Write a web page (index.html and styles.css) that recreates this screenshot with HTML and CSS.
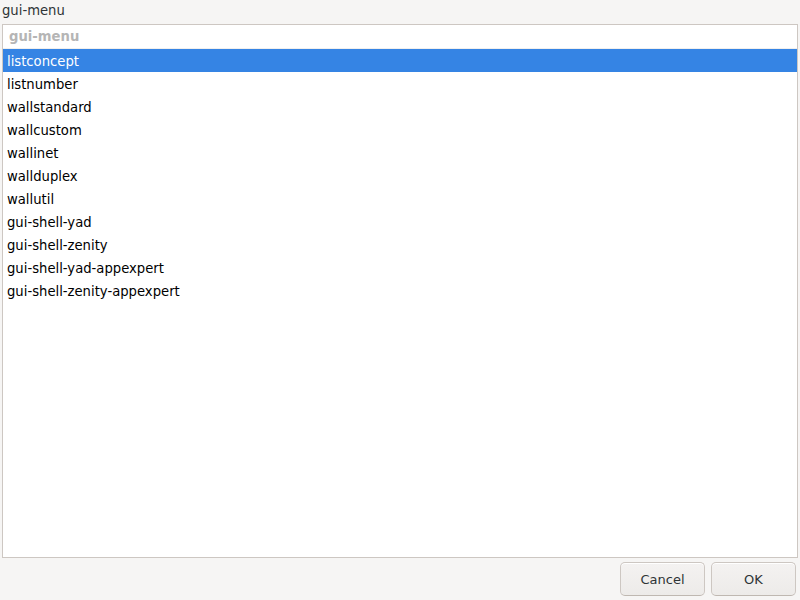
FILE: index.html
```html
<!DOCTYPE html>
<html>
<head>
<meta charset="utf-8">
<link rel="stylesheet" href="styles.css">
</head>
<body>
<div class="dialog">
  <div class="title">gui-menu</div>
  <div class="list">
    <div class="header">gui-menu</div>
    <div class="row selected">listconcept</div>
    <div class="row">listnumber</div>
    <div class="row">wallstandard</div>
    <div class="row">wallcustom</div>
    <div class="row">wallinet</div>
    <div class="row">wallduplex</div>
    <div class="row">wallutil</div>
    <div class="row">gui-shell-yad</div>
    <div class="row">gui-shell-zenity</div>
    <div class="row">gui-shell-yad-appexpert</div>
    <div class="row">gui-shell-zenity-appexpert</div>
  </div>
  <div class="buttons">
    <button class="btn">Cancel</button>
    <button class="btn">OK</button>
  </div>
</div>
</body>
</html>
```
FILE: styles.css
```css
html, body {
  margin: 0;
  padding: 0;
  background: #f6f5f4;
  width: 800px;
  height: 600px;
  overflow: hidden;
}
.dialog {
  font-family: "DejaVu Sans", sans-serif;
  font-size: 13.2px;
  color: #2e3436;
  display: flex;
  flex-direction: column;
  height: 600px;
  padding: 0 2px;
  box-sizing: border-box;
}
.title {
  height: 24px;
  line-height: 22px;
  color: #2e3436;
}
.list {
  flex: 1;
  background: #ffffff;
  border: 1px solid #cdc7c2;
  display: flex;
  flex-direction: column;
  min-height: 0;
}
.header {
  height: 24px;
  box-sizing: border-box;
  line-height: 23px;
  padding-left: 6px;
  font-weight: bold;
  color: #b5b5b5;
  border-bottom: 1px solid #f0efee;
}
.row {
  height: 21px;
  padding-top: 2px;
  line-height: 21px;
  padding-left: 4px;
  color: #000000;
}
.row.selected {
  background: #3584e4;
  color: #ffffff;
}
.buttons {
  height: 42px;
  display: flex;
  justify-content: flex-end;
  align-items: flex-start;
  gap: 6px;
  padding: 4px 2px 0 0;
  box-sizing: border-box;
}
.btn {
  font-family: "DejaVu Sans", sans-serif;
  font-size: 13px;
  color: #2e3436;
  width: 85px;
  height: 34px;
  border: 1px solid #cdc7c2;
  border-bottom-color: #bfb8b1;
  border-radius: 5px;
  background: linear-gradient(#f4f2f1, #edebe9);
  box-shadow: inset 0 1px #ffffff;
  padding: 0;
}
```
